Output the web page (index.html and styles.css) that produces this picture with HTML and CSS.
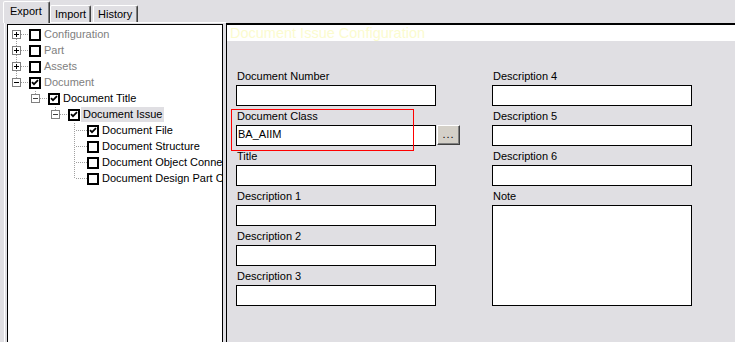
FILE: index.html
```html
<!DOCTYPE html>
<html>
<head>
<meta charset="utf-8">
<link rel="stylesheet" href="styles.css">
</head>
<body>
<div class="app">
  <div class="left">
    <div class="tabs">
      <div class="tab active t-export">Export</div>
      <div class="tab t-import">Import</div>
      <div class="tab t-history">History</div>
    </div>
    <div class="panel">
      <div class="tree">
        <div class="row l0">
          <svg class="conn" width="21" height="16" viewBox="0 0 21 16"><path class="dot" d="M8.5 12V16M13 7.5H21"/><rect class="box" x="4.5" y="3.5" width="8" height="8"/><path class="sign" d="M6 7.5H11M8.5 5V10"/></svg>
          <svg class="cb" width="12" height="12" viewBox="0 0 12 12"><rect x="1" y="1" width="10" height="10" class="cbox"/></svg>
          <span class="txt gray">Configuration</span>
        </div>
        <div class="row l0">
          <svg class="conn" width="21" height="16" viewBox="0 0 21 16"><path class="dot" d="M8.5 0V3M8.5 12V16M13 7.5H21"/><rect class="box" x="4.5" y="3.5" width="8" height="8"/><path class="sign" d="M6 7.5H11M8.5 5V10"/></svg>
          <svg class="cb" width="12" height="12" viewBox="0 0 12 12"><rect x="1" y="1" width="10" height="10" class="cbox"/></svg>
          <span class="txt gray">Part</span>
        </div>
        <div class="row l0">
          <svg class="conn" width="21" height="16" viewBox="0 0 21 16"><path class="dot" d="M8.5 0V3M8.5 12V16M13 7.5H21"/><rect class="box" x="4.5" y="3.5" width="8" height="8"/><path class="sign" d="M6 7.5H11M8.5 5V10"/></svg>
          <svg class="cb" width="12" height="12" viewBox="0 0 12 12"><rect x="1" y="1" width="10" height="10" class="cbox"/></svg>
          <span class="txt gray">Assets</span>
        </div>
        <div class="row l0">
          <svg class="conn" width="21" height="16" viewBox="0 0 21 16"><path class="dot" d="M8.5 0V3M13 7.5H21"/><rect class="box" x="4.5" y="3.5" width="8" height="8"/><path class="sign" d="M6 7.5H11"/></svg>
          <svg class="cb" width="12" height="12" viewBox="0 0 12 12"><rect x="1" y="1" width="10" height="10" class="cbox"/><path class="tick" d="M3 5.2L5 7.2L9 3.2"/></svg>
          <span class="txt gray">Document</span>
        </div>
        <div class="row l1">
          <svg class="conn" width="21" height="16" viewBox="0 0 21 16"><path class="dot" d="M8.5 0V3M13 7.5H21"/><rect class="box" x="4.5" y="3.5" width="8" height="8"/><path class="sign light" d="M6 7.5H11"/></svg>
          <svg class="cb" width="12" height="12" viewBox="0 0 12 12"><rect x="1" y="1" width="10" height="10" class="cbox"/><path class="tick" d="M3 5.2L5 7.2L9 3.2"/></svg>
          <span class="txt">Document Title</span>
        </div>
        <div class="row l2">
          <svg class="conn" width="21" height="16" viewBox="0 0 21 16"><path class="dot" d="M8.5 0V3M13 7.5H21"/><rect class="box" x="4.5" y="3.5" width="8" height="8"/><path class="sign light" d="M6 7.5H11"/></svg>
          <svg class="cb" width="12" height="12" viewBox="0 0 12 12"><rect x="1" y="1" width="10" height="10" class="cbox"/><path class="tick" d="M3 5.2L5 7.2L9 3.2"/></svg>
          <span class="txt sel">Document Issue</span>
        </div>
        <div class="row l3">
          <svg class="conn" width="21" height="16" viewBox="0 0 21 16"><path class="dot" d="M8.5 0V16M10 7.5H21"/></svg>
          <svg class="cb" width="12" height="12" viewBox="0 0 12 12"><rect x="1" y="1" width="10" height="10" class="cbox"/><path class="tick" d="M3 5.2L5 7.2L9 3.2"/></svg>
          <span class="txt">Document File</span>
        </div>
        <div class="row l3">
          <svg class="conn" width="21" height="16" viewBox="0 0 21 16"><path class="dot" d="M8.5 0V16M10 7.5H21"/></svg>
          <svg class="cb" width="12" height="12" viewBox="0 0 12 12"><rect x="1" y="1" width="10" height="10" class="cbox"/></svg>
          <span class="txt">Document Structure</span>
        </div>
        <div class="row l3">
          <svg class="conn" width="21" height="16" viewBox="0 0 21 16"><path class="dot" d="M8.5 0V16M10 7.5H21"/></svg>
          <svg class="cb" width="12" height="12" viewBox="0 0 12 12"><rect x="1" y="1" width="10" height="10" class="cbox"/></svg>
          <span class="txt">Document Object Connections</span>
        </div>
        <div class="row l3">
          <svg class="conn" width="21" height="16" viewBox="0 0 21 16"><path class="dot" d="M8.5 0V8M10 7.5H21"/></svg>
          <svg class="cb" width="12" height="12" viewBox="0 0 12 12"><rect x="1" y="1" width="10" height="10" class="cbox"/></svg>
          <span class="txt">Document Design Part Connections</span>
        </div>
      </div>
    </div>
  </div>
  <div class="right">
    <div class="head">Document Issue Configuration</div>
    <div class="form">
      <div class="col col-a">
        <div class="field"><div class="lbl">Document Number</div><div class="inp"></div></div>
        <div class="field">
          <div class="lbl">Document Class</div>
          <div class="inline"><div class="inp">BA_AIIM</div><div class="btn">...</div></div>
          <div class="hl"></div>
        </div>
        <div class="field"><div class="lbl">Title</div><div class="inp"></div></div>
        <div class="field"><div class="lbl">Description 1</div><div class="inp"></div></div>
        <div class="field"><div class="lbl">Description 2</div><div class="inp"></div></div>
        <div class="field"><div class="lbl">Description 3</div><div class="inp"></div></div>
      </div>
      <div class="col col-b">
        <div class="field"><div class="lbl">Description 4</div><div class="inp"></div></div>
        <div class="field"><div class="lbl">Description 5</div><div class="inp"></div></div>
        <div class="field"><div class="lbl">Description 6</div><div class="inp"></div></div>
        <div class="field"><div class="lbl">Note</div><div class="inp note"></div></div>
      </div>
    </div>
  </div>
</div>
</body>
</html>
```

FILE: styles.css
```css
html, body {
  margin: 0;
  background: #e0dfe3;
  font-family: "Liberation Sans", Arial, sans-serif;
  font-size: 11px;
  color: #000;
  overflow: hidden;
}

.app {
  display: flex;
  height: 342px;
  overflow: hidden;
}

/* ---------- left: tab control ---------- */
.left {
  width: 226px;
  flex: none;
  display: flex;
  flex-direction: column;
  overflow: hidden;
}

.tabs {
  height: 22px;
  flex: none;
  display: flex;
  align-items: flex-end;
  padding-left: 3px;
}

.tab {
  box-sizing: border-box;
  height: 17px;
  padding: 2px 0 0 4px;
  border: 1px solid;
  border-bottom: none;
  border-color: #fff #404040 transparent #fff;
  box-shadow: inset -1px 0 #808080;
  border-radius: 2px 2px 0 0;
  line-height: 13px;
  white-space: nowrap;
  background: #e0dfe3;
}

.tab.active {
  height: 22px;
  margin-bottom: -1px;
  padding: 3px 0 0 6px;
  z-index: 1;
}

.t-export { width: 47px; }
.t-import { width: 41px; }
.t-history { width: 45px; margin-left: 2px; }

.panel {
  flex: 1;
  margin-left: 4px;
  border-top: 1px solid #fff;
  border-left: 1px solid #fff;
  padding: 1px 0 0 2px;
}

.tree {
  box-sizing: border-box;
  width: 216px;
  height: 330px;
  background: #fff;
  border: 1px solid #000;
  padding-top: 2px;
  overflow: hidden;
}

.row {
  display: flex;
  height: 16px;
  white-space: nowrap;
}

.l1 { padding-left: 19px; }
.l2 { padding-left: 39px; }
.l3 { padding-left: 58px; }

.conn { flex: none; display: block; }

.dot {
  fill: none;
  stroke: #a0a0a0;
  stroke-width: 1;
  stroke-dasharray: 1 1;
}

.box {
  fill: #fff;
  stroke: #808080;
  stroke-width: 1;
}

.sign {
  fill: none;
  stroke: #000;
  stroke-width: 1;
}

.sign.light { stroke: #404040; }

.cb {
  flex: none;
  display: block;
  margin-top: 2px;
}

.cbox {
  fill: #fff;
  stroke: #000;
  stroke-width: 2;
}

.tick {
  fill: none;
  stroke: #000;
  stroke-width: 1.8;
}

.txt {
  height: 15px;
  line-height: 15px;
  padding: 0 2px;
  margin-left: 1px;
}

.gray { color: #808080; }
.sel { background: #e0dfe3; }

/* ---------- right: configuration panel ---------- */
.right {
  flex: 1;
  margin-top: 23px;
  border-top: 2px solid #000;
  border-left: 1px solid #000;
  display: flex;
  flex-direction: column;
}

.head {
  height: 16px;
  flex: none;
  background: #fff;
  padding-left: 3px;
  font-size: 14.5px;
  line-height: 16px;
  color: #fbfbcf;
  white-space: nowrap;
}

.form {
  display: flex;
  gap: 32px;
  padding: 25px 0 0 9px;
}

.col {
  display: flex;
  flex-direction: column;
}

.col-a { width: 224px; }
.col-b { width: 200px; }

.field {
  padding-top: 4px;
  position: relative;
}

.lbl {
  height: 13px;
  line-height: 13px;
  margin-bottom: 2px;
  padding-left: 1px;
  white-space: nowrap;
}

.inp {
  box-sizing: border-box;
  width: 200px;
  height: 21px;
  background: #fff;
  border: 1px solid #000;
  padding-left: 1px;
  line-height: 17px;
  flex: none;
}

.inp.note { height: 101px; }

.inline { display: flex; }

.btn {
  box-sizing: border-box;
  width: 23px;
  height: 20px;
  margin-left: 1px;
  background: #d4d0c8;
  border: 1px solid;
  border-color: #fff #404040 #404040 #fff;
  box-shadow: inset -1px -1px #808080;
  text-align: center;
  line-height: 17px;
  letter-spacing: 1px;
}

.hl {
  position: absolute;
  left: -5px;
  top: 3px;
  width: 183px;
  height: 42px;
  box-sizing: border-box;
  border: 1px solid #f00;
  pointer-events: none;
}
```
